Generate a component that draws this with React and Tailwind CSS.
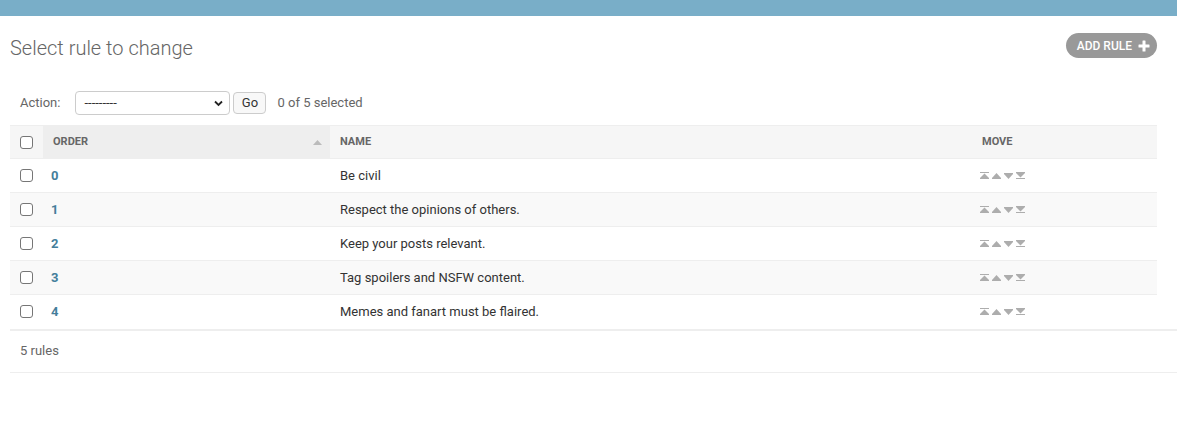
import React from "react";

// Django-admin style change list for ordered rules.

const RULES = [
  { order: 0, name: "Be civil" },
  { order: 1, name: "Respect the opinions of others." },
  { order: 2, name: "Keep your posts relevant." },
  { order: 3, name: "Tag spoilers and NSFW content." },
  { order: 4, name: "Memes and fanart must be flaired." },
];

function Box() {
  return <span className="block w-[13px] h-[13px] rounded-[3px] border border-[#767676] bg-white" />;
}

function MoveIcons() {
  return (
    <div className="flex items-center gap-[3px] text-[#adadad]">
      <svg width="9" height="7" viewBox="0 0 9 7" fill="currentColor">
        <rect x="0" y="0" width="9" height="1" />
        <path d="M4.5 1.5 L9 6 L9 7 L0 7 L0 6 Z" />
      </svg>
      <svg width="9" height="6" viewBox="0 0 9 6" fill="currentColor">
        <path d="M4.5 0 L9 5 L9 6 L0 6 L0 5 Z" />
      </svg>
      <svg width="9" height="6" viewBox="0 0 9 6" fill="currentColor">
        <path d="M0 0 L9 0 L9 1 L4.5 6 L0 1 Z" />
      </svg>
      <svg width="9" height="7" viewBox="0 0 9 7" fill="currentColor">
        <path d="M0 0 L9 0 L9 1 L4.5 5.5 L0 1 Z" />
        <rect x="0" y="6" width="9" height="1" />
      </svg>
    </div>
  );
}

export default function App() {
  return (
    <div
      className="min-h-[428px] bg-white text-[13px] text-[#333]"
      style={{ fontFamily: "Roboto, 'Liberation Sans', sans-serif" }}
    >
      <div className="h-4 bg-[#79aec8]" />

      <div className="pl-[10px]">
        <div className="flex items-center justify-between pr-5 pt-[17px]">
          <h1 className="text-[20px] font-light text-[#666] leading-[30px]">Select rule to change</h1>
          <button className="-mt-[5px] flex items-center gap-[6px] h-[25px] rounded-full bg-[#999] pl-[11px] pr-[7px] text-[12px] font-medium text-white">
            ADD RULE
            <svg width="12" height="12" viewBox="0 0 12 12" fill="white">
              <rect x="4.5" y="0.5" width="3" height="11" rx="0.5" />
              <rect x="0.5" y="4.5" width="11" height="3" rx="0.5" />
            </svg>
          </button>
        </div>

        <div className="flex items-center h-[24px] mt-[28px] pl-[10px]">
          <span className="text-[#666] mr-[15px]">Action:</span>
          <div className="relative w-[155px] h-[24px] rounded-[4px] border border-[#ccc] bg-white flex items-center pl-[8px]">
            <span className="text-[13px] text-[#333]">---------</span>
            <svg className="absolute right-[6px] top-[8px]" width="9" height="7" viewBox="0 0 9 7" fill="none" stroke="#222" strokeWidth="1.8">
              <path d="M1 1.5 L4.5 5 L8 1.5" />
            </svg>
          </div>
          <button className="ml-[3px] w-[33px] h-[22px] rounded-[4px] border border-[#ccc] bg-[#f8f8f8] text-[13px] text-[#333]">
            Go
          </button>
          <span className="ml-[11px] text-[#666]">0 of 5 selected</span>
        </div>

        <table className="mt-[10px] w-[1147px] border-collapse table-fixed">
          <thead>
            <tr className="h-[33px] bg-[#f6f6f6] border-t border-[#eee] text-[11px] font-bold uppercase text-[#666]">
              <th className="w-[33px] pl-[10px] text-left font-normal">
                <Box />
              </th>
              <th className="w-[287px] bg-[#eee] text-left pl-[10px] pr-[8px]">
                <div className="flex items-center justify-between">
                  <span>Order</span>
                  <svg width="9" height="5" viewBox="0 0 9 5" fill="#bbb">
                    <path d="M4.5 0 L9 5 L0 5 Z" />
                  </svg>
                </div>
              </th>
              <th className="w-[642px] text-left pl-[10px]">Name</th>
              <th className="text-left pl-[10px]">Move</th>
            </tr>
          </thead>
          <tbody>
            {RULES.map((r, i) => (
              <tr key={r.order} className={`h-[34px] border-t border-[#eee] ${i % 2 ? "bg-[#f9f9f9]" : "bg-white"}`}>
                <td className="pl-[10px]">
                  <Box />
                </td>
                <td className="pl-[8px]">
                  <a className="font-bold text-[#447e9b]">{r.order}</a>
                </td>
                <td className="pl-[10px]">{r.name}</td>
                <td className="pl-[8px]">
                  <MoveIcons />
                </td>
              </tr>
            ))}
          </tbody>
        </table>

        <div className="border-t-2 border-b border-t-[#eee] border-b-[#eee] h-[44px] flex items-center pl-[10px] text-[#666]">
          5 rules
        </div>
      </div>
    </div>
  );
}
